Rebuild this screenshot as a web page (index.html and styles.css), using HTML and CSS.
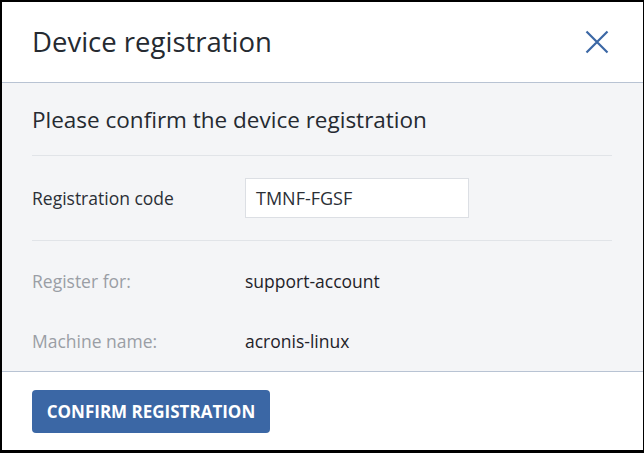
FILE: index.html
```html
<!DOCTYPE html>
<html>
<head>
<meta charset="utf-8">
<link rel="stylesheet" href="styles.css">
</head>
<body>
<div class="dialog">
  <div class="header">
    <h1 class="title">Device registration</h1>
    <svg class="close" width="24" height="24" viewBox="0 0 24 24"><path d="M1.5 1.5 L22.5 22.5 M22.5 1.5 L1.5 22.5" stroke="#3b67a5" stroke-width="2.2" fill="none"/></svg>
  </div>
  <div class="content">
    <h2 class="subtitle">Please confirm the device registration</h2>
    <div class="row row-input">
      <div class="label">Registration code</div>
      <div class="input">TMNF-FGSF</div>
    </div>
    <div class="row row-info first">
      <div class="label muted">Register for:</div>
      <div class="value">support-account</div>
    </div>
    <div class="row row-info">
      <div class="label muted">Machine name:</div>
      <div class="value">acronis-linux</div>
    </div>
  </div>
  <div class="footer">
    <button class="btn">CONFIRM REGISTRATION</button>
  </div>
</div>
</body>
</html>
```
FILE: styles.css
```css
html, body {
  margin: 0;
  padding: 0;
  background: #000;
}
body {
  font-family: "Open Sans", "Liberation Sans", sans-serif;
  color: #2b2f36;
}
.dialog {
  margin: 2px 1px 0 2px;
  width: 641px;
  height: 448px;
  background: #fff;
  display: flex;
  flex-direction: column;
}
.header {
  height: 81px;
  box-sizing: border-box;
  border-bottom: 1px solid #b8c3d3;
  display: flex;
  align-items: center;
  justify-content: space-between;
  padding: 0 34px 0 30px;
  flex: none;
}
.title {
  margin: 0;
  font-size: 27.5px;
  font-weight: 400;
  line-height: 32px;
  color: #252a31;
}
.close {
  display: block;
}
.content {
  flex: 1;
  background: #f4f5f7;
  padding: 22px 31px 0 30px;
  border-bottom: 1px solid #b8c3d3;
}
.subtitle {
  margin: 0;
  font-size: 22.5px;
  font-weight: 400;
  line-height: 30px;
  color: #252a31;
  padding-bottom: 20px;
  border-bottom: 1px solid #e1e4e8;
}
.row {
  display: flex;
  align-items: center;
  font-size: 17.5px;
  line-height: 24px;
}
.row-input {
  padding: 22px 0;
  border-bottom: 1px solid #e1e4e8;
}
.row-info {
  height: 24px;
  margin-top: 36px;
}
.row-info.first {
  margin-top: 28px;
}
.label {
  width: 213px;
  flex: none;
  color: #2b2f36;
}
.row-input .label {
  margin-top: -1px;
}
.label.muted {
  color: #9a9ea5;
}
.value {
  color: #1f2329;
}
.input {
  width: 224px;
  height: 40px;
  box-sizing: border-box;
  border: 1px solid #dcdfe4;
  background: #fff;
  padding: 7px 10px;
  font-size: 18px;
  line-height: 24px;
  color: #2b2f36;
}
.footer {
  height: 78px;
  box-sizing: border-box;
  padding: 18px 30px;
  flex: none;
}
.btn {
  display: block;
  font-family: "Open Sans", "Liberation Sans", sans-serif;
  font-size: 17px;
  font-weight: 700;
  color: #fff;
  background: #3b67a5;
  border: none;
  border-radius: 4px;
  height: 43px;
  width: 238px;
  padding: 0;
  cursor: pointer;
}
```
